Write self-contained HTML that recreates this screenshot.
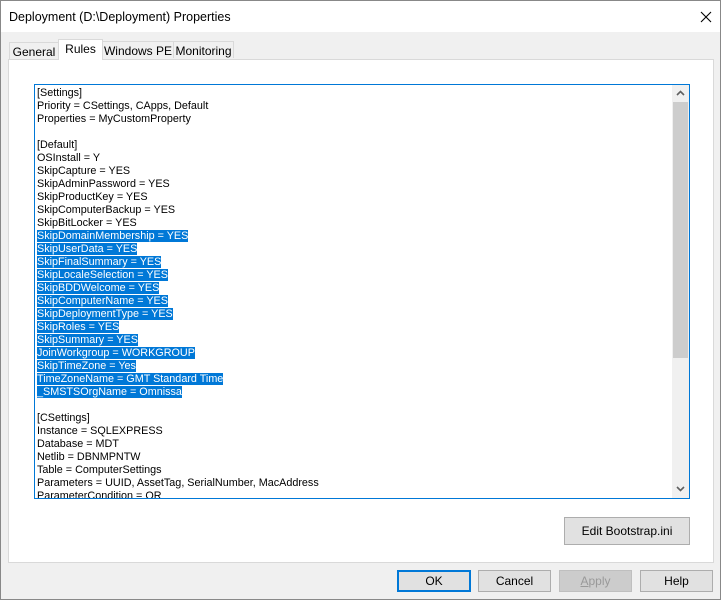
<!DOCTYPE html>
<html><head><style>
body{margin:0;width:721px;height:600px;overflow:hidden;font-family:"Liberation Sans",sans-serif;font-size:12px;color:#000}
.win{position:absolute;left:0;top:0;width:719px;height:598px;border:1px solid #888;background:#f0f0f0}
.title{position:absolute;left:0;top:0;width:719px;height:31px;background:#fff}
.title span{position:absolute;left:8px;top:9px;font-size:12.5px}
.tab{position:absolute;top:40px;height:17px;border:1px solid #d9d9d9;border-bottom:none;background:#f0f0f0;line-height:18px;font-size:12px;box-sizing:border-box;text-align:center}
.panel{position:absolute;left:7px;top:58px;width:704px;height:502px;border:1px solid #d9d9d9;background:#fff}
.tb{position:absolute;left:25px;top:24px;width:654px;height:413px;border:1px solid #0078d7;background:#fff;overflow:hidden}
.lines{position:absolute;left:2px;top:2px;line-height:13px;font-size:10.8px;white-space:pre}
.sel{background:#0078d7;color:#fff}
.sb{position:absolute;left:637px;top:0;width:17px;height:413px;background:#f0f0f0}
.thumb{position:absolute;left:1px;top:17px;width:15px;height:256px;background:#cdcdcd}
.btn{position:absolute;height:20px;border:1px solid #adadad;background:#e1e1e1;text-align:center;line-height:20px;font-size:12px}
</style></head><body>
<div class="win">
<div class="title"><span>Deployment (D:\Deployment) Properties</span>
<svg style="position:absolute;left:699px;top:10px" width="12" height="12"><path d="M1 1L11 11M11 1L1 11" stroke="#000" stroke-width="1.1"/></svg></div>
<div class="panel">
<div class="tb"><div class="lines">[Settings]
Priority = CSettings, CApps, Default
Properties = MyCustomProperty

[Default]
OSInstall = Y
SkipCapture = YES
SkipAdminPassword = YES
SkipProductKey = YES
SkipComputerBackup = YES
SkipBitLocker = YES
<span class="sel">SkipDomainMembership = YES</span>
<span class="sel">SkipUserData = YES</span>
<span class="sel">SkipFinalSummary = YES</span>
<span class="sel">SkipLocaleSelection = YES</span>
<span class="sel">SkipBDDWelcome = YES</span>
<span class="sel">SkipComputerName = YES</span>
<span class="sel">SkipDeploymentType = YES</span>
<span class="sel">SkipRoles = YES</span>
<span class="sel">SkipSummary = YES</span>
<span class="sel">JoinWorkgroup = WORKGROUP</span>
<span class="sel">SkipTimeZone = Yes</span>
<span class="sel">TimeZoneName = GMT Standard Time</span>
<span class="sel">_SMSTSOrgName = Omnissa</span>

[CSettings]
Instance = SQLEXPRESS
Database = MDT
Netlib = DBNMPNTW
Table = ComputerSettings
Parameters = UUID, AssetTag, SerialNumber, MacAddress
ParameterCondition = OR</div>
<div class="sb">
<svg style="position:absolute;left:4px;top:5px" width="9" height="6"><path d="M1 5L4.5 1.5L8 5" stroke="#606060" stroke-width="1.6" fill="none"/></svg>
<div class="thumb"></div>
<svg style="position:absolute;left:4px;top:401px" width="9" height="6"><path d="M1 1L4.5 4.5L8 1" stroke="#606060" stroke-width="1.6" fill="none"/></svg>
</div>
</div>
<div class="btn" style="left:555px;top:457px;width:124px;height:26px;line-height:26px">Edit Bootstrap.ini</div>
</div>
<div class="tab" style="left:8px;top:41px;width:50px;height:17px">General</div>
<div class="tab" style="left:57px;top:38px;width:45px;height:21px;background:#fff;z-index:2">Rules</div>
<div class="tab" style="left:101px;width:72px">Windows PE</div>
<div class="tab" style="left:172px;width:61px">Monitoring</div>
<div class="btn" style="left:396px;top:569px;width:70px;border:2px solid #0078d7;height:18px;line-height:18px">OK</div>
<div class="btn" style="left:477px;top:569px;width:71px">Cancel</div>
<div class="btn" style="left:558px;top:569px;width:71px;color:#999;background:#ccc;border-color:#bfbfbf"><u>A</u>pply</div>
<div class="btn" style="left:639px;top:569px;width:71px">Help</div>
</div>
</body></html>
